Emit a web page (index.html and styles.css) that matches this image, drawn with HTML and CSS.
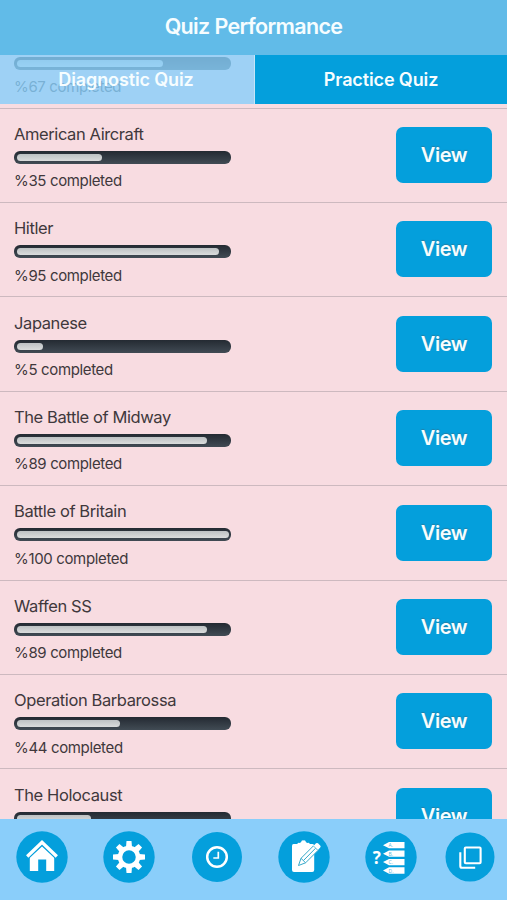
FILE: index.html
```html
<!DOCTYPE html>
<html lang="en">
<head>
<meta charset="utf-8">
<title>Quiz Performance</title>
<link rel="stylesheet" href="styles.css">
</head>
<body>
<div class="app">
  <header class="header"><h1>Quiz Performance</h1></header>
  <main class="content">
    <nav class="tabs">
      <a class="tab tab-clear">Diagnostic Quiz</a>
      <a class="tab tab-solid">Practice Quiz</a>
    </nav>
    <ul class="list">
      <li class="row"><div class="info"><h2>&nbsp;</h2><div class="bar"><span style="width:69%"></span></div><p>%67 completed</p></div></li>
      <li class="row"><div class="info"><h2>American Aircraft</h2><div class="bar"><span style="width:40.2%"></span></div><p>%35 completed</p></div><button>View</button></li>
      <li class="row"><div class="info"><h2>Hitler</h2><div class="bar"><span style="width:95.5%"></span></div><p>%95 completed</p></div><button>View</button></li>
      <li class="row"><div class="info"><h2>Japanese</h2><div class="bar"><span style="width:12.7%"></span></div><p>%5 completed</p></div><button>View</button></li>
      <li class="row"><div class="info"><h2>The Battle of Midway</h2><div class="bar"><span style="width:90%"></span></div><p>%89 completed</p></div><button>View</button></li>
      <li class="row"><div class="info"><h2>Battle of Britain</h2><div class="bar"><span style="width:100%"></span></div><p>%100 completed</p></div><button>View</button></li>
      <li class="row"><div class="info"><h2>Waffen SS</h2><div class="bar"><span style="width:90%"></span></div><p>%89 completed</p></div><button>View</button></li>
      <li class="row"><div class="info"><h2>Operation Barbarossa</h2><div class="bar"><span style="width:48.7%"></span></div><p>%44 completed</p></div><button>View</button></li>
      <li class="row"><div class="info"><h2>The Holocaust</h2><div class="bar"><span style="width:35%"></span></div></div><button>View</button></li>
    </ul>
  </main>
  <footer class="footer">
    <svg viewBox="0 0 52 52"><circle class="disc" cx="26" cy="26" r="25.7"/>
      <path class="fill" d="M13.8 26.2 26 14.6 38.2 26.2V40H30.2V28.5H22.2V40H13.8Z"/>
      <path class="edge" d="M10.5 27.8 26 13.5 41.5 27.8"/>
      <path class="roof" d="M11.2 25.5 26 11.4 40.8 25.5"/></svg>
    <svg viewBox="0 0 52 52"><circle class="disc" cx="26" cy="26" r="25.7"/>
      <circle class="gear" cx="26" cy="26" r="9"/>
      <g class="fill" transform="translate(26 26)">
        <path id="tooth" d="M-3-10 -2.5-16H2.5L3-10Z"/>
        <use href="#tooth" transform="rotate(45)"/><use href="#tooth" transform="rotate(90)"/><use href="#tooth" transform="rotate(135)"/><use href="#tooth" transform="rotate(180)"/><use href="#tooth" transform="rotate(225)"/><use href="#tooth" transform="rotate(270)"/><use href="#tooth" transform="rotate(315)"/>
      </g></svg>
    <svg viewBox="0 0 52 52"><circle class="disc" cx="26" cy="26" r="25"/>
      <circle class="line" cx="26" cy="26" r="9.8" stroke-width="2.5"/>
      <path class="line" d="M27.3 20.8V27H22.3" stroke-width="1.7"/></svg>
    <svg viewBox="0 0 52 52"><circle class="disc" cx="26" cy="26" r="25.7"/>
      <path class="fill" d="M15.5 13H19.3Q20 11.3 21.5 12L23 11.3Q23.5 9 25.5 9.4 27.6 9 28 11.3L29.5 12Q31.2 11.3 31.8 13H34.5Q36.2 13 36.2 15V39Q36.2 41 34.2 41H16Q14 41 14 39V15Q14 13 15.5 13Z"/>
      <path class="pencil" d="M20.5 34.5 23 27.3 35.5 14.8 40 19.4 27.6 31.8ZM23 27.3 27.6 31.8M25.5 29.5 37.5 17.3"/>
      <path class="fill" d="M35.6 14.7 38 12.3Q39 11.5 40 12.3L42.2 14.5Q43.2 15.6 42.2 16.6L40 19Z"/></svg>
    <svg viewBox="0 0 52 52"><circle class="disc" cx="26" cy="26" r="25.7"/>
      <text class="question" x="7.8" y="33">?</text>
      <path class="fill" d="M18 14.2 24 11H39.5V17.3H24ZM18 22.7 24 19.5H39.5V25.8H24ZM18 31.1 24 27.9H39.5V34.2H24ZM18 39.5 24 36.3H39.5V42.8H24Z"/>
      <g class="letters"><text x="23.5" y="16.3">A.</text><text x="23.5" y="24.8">B.</text><text x="23.5" y="33.2">C.</text><text x="23.5" y="41.6">D.</text></g></svg>
    <svg class="last" viewBox="0 0 52 52"><circle class="disc" cx="26" cy="26" r="24.5"/>
      <rect class="line" x="20.8" y="16.5" width="15.8" height="15.8" rx="1" stroke-width="2.1"/>
      <path class="line" d="M16.3 21.3V35Q16.3 36.8 18 36.8H31.2" stroke-width="2.1"/></svg>
  </footer>
</div>
</body>
</html>
```
FILE: styles.css
```css
* { box-sizing: border-box; }
body { margin: 0; font-family: Inter, "Liberation Sans", sans-serif; }
h1, h2, p, ul { margin: 0; padding: 0; }
.app { width: 507px; height: 900px; display: flex; flex-direction: column; overflow: hidden; background: #f8dce1; }
.header { flex: 0 0 55px; background: #61bbe8; text-align: center; color: #f6fdff; }
h1 { font-size: 21.5px; line-height: 53px; font-weight: 600; letter-spacing: -0.65px; }
.content { position: relative; flex: 1; min-height: 0; overflow: hidden; }
.tabs { position: absolute; top: 0; left: 0; width: 100%; height: 49px; display: flex; z-index: 1; }
.tab { text-align: center; color: #f6fdff; font-size: 18px; line-height: 49px; font-weight: 600; letter-spacing: -0.12px; }
.tab-clear { flex: 0 0 255px; padding-right: 2px; background: rgba(135, 206, 250, .8); border-right: 1px solid #c5e5f8; }
.tab-solid { flex: 1; background: #049fdc; }
.list { list-style: none; margin-top: -40.8px; }
.row { height: 94.4px; display: flex; justify-content: space-between; align-items: flex-start; padding: 0 15px 0 14px; border-bottom: 1px solid #cdb9bf; }
.info { width: 217px; color: #40383c; }
h2 { font-size: 16.5px; line-height: 24px; font-weight: 400; margin-top: 13.3px; letter-spacing: -0.4px; white-space: nowrap; }
.bar { height: 13px; margin-top: 5px; padding: 3px 2.5px; border-radius: 6px; background: linear-gradient(#242a32, #414b54); }
.bar span { display: block; height: 7px; border-radius: 3.5px; background: linear-gradient(#bdc1c3, #dadcdc); }
.info p { font-size: 15px; line-height: 20px; margin-top: 7.3px; white-space: nowrap; letter-spacing: -0.35px; }
button { width: 96px; height: 56px; margin-top: 18.5px; padding: 0; border: 0; border-radius: 7px; background: #049fdc; color: #f6fdff; font: 600 20px Inter, sans-serif; letter-spacing: -0.45px; text-shadow: 0 -1px 1px #2380a8; }
.footer { flex: 0 0 81px; display: flex; align-items: flex-start; gap: 35.3px; padding: 12px 0 0 16px; background: #8acefa; }
.footer svg { width: 52px; height: 52px; flex: none; }
.footer .last { margin-left: -8.5px; }
.disc { fill: #049fdc; }
.fill { fill: #fff; }
.roof { fill: none; stroke: #fff; stroke-width: 3.3; }
.edge { fill: none; stroke: #049fdc; stroke-width: 3; }
.gear { fill: none; stroke: #fff; stroke-width: 4.5; }
.line { fill: none; stroke: #fff; }
.pencil { fill: #fff; stroke: #36a9ca; stroke-width: 1; }
.question { fill: #fff; font: 700 17px "Open Sans", sans-serif; }
.letters { fill: #55b7dc; font: 5px "Open Sans", sans-serif; }
```
